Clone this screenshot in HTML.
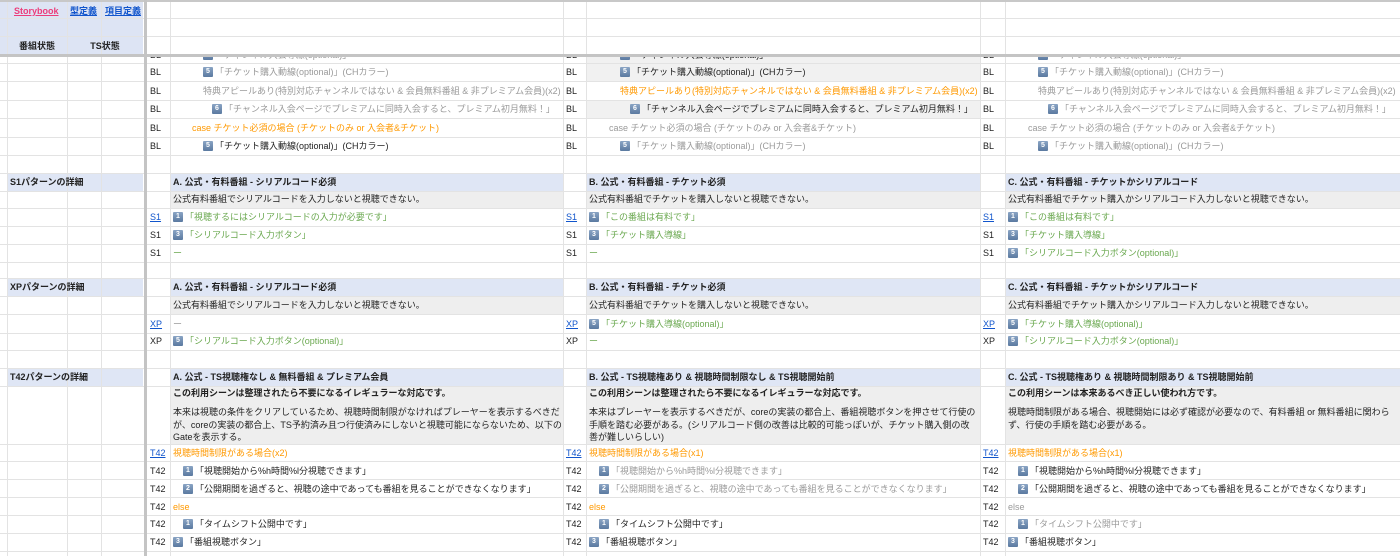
<!DOCTYPE html>
<html><head><meta charset="utf-8"><style>
*{margin:0;padding:0;box-sizing:border-box}
body{width:1400px;height:556px;overflow:hidden;background:#fff;font-family:"Liberation Sans","Noto Sans CJK JP",sans-serif;font-size:9px;color:#222;position:relative}
.a{position:absolute}
.hl{position:absolute;left:0;width:1400px;height:1px;background:#e3e3e3}
.vl{position:absolute;top:0;height:556px;width:1px;background:#e3e3e3}
.c{position:absolute;white-space:nowrap;line-height:18px;height:18px}
.g{color:#9a9a9a}.o{color:#f90}.gr{color:#6aa84f}.k{color:#222}
.lk{color:#1155cc;text-decoration:underline}
.b{display:inline-block;width:10px;height:10px;background:linear-gradient(#8aa4c4,#5b7aa0);color:#fff;font-size:7px;line-height:10px;text-align:center;border-radius:1px;margin-right:2px;vertical-align:middle;font-weight:bold;position:relative;top:-1px}
.hd{background:#dfe6f5;font-weight:bold;color:#222}
.ds{background:#eeeeee}
.bf{font-weight:bold}
.p{position:absolute;line-height:12.5px;white-space:nowrap}
</style></head><body>
<div class="a" style="left:0;top:0;width:143px;height:54px;background:#dde4f4"></div>
<div class="a" style="left:586px;top:56px;width:394px;height:25px;background:#f1f1f1"></div>
<div class="a" style="left:586px;top:100px;width:394px;height:18px;background:#f1f1f1"></div>
<div class="a hd" style="left:7px;top:173px;width:136px;height:18px"></div>
<div class="a hd" style="left:7px;top:278px;width:136px;height:18px"></div>
<div class="a hd" style="left:7px;top:368px;width:136px;height:18px"></div>
<div class="a hd" style="left:170px;top:173px;width:393px;height:18px"></div>
<div class="a hd" style="left:586px;top:173px;width:394px;height:18px"></div>
<div class="a hd" style="left:1005px;top:173px;width:395px;height:18px"></div>
<div class="a hd" style="left:170px;top:278px;width:393px;height:18px"></div>
<div class="a hd" style="left:586px;top:278px;width:394px;height:18px"></div>
<div class="a hd" style="left:1005px;top:278px;width:395px;height:18px"></div>
<div class="a hd" style="left:170px;top:368px;width:393px;height:18px"></div>
<div class="a hd" style="left:586px;top:368px;width:394px;height:18px"></div>
<div class="a hd" style="left:1005px;top:368px;width:395px;height:18px"></div>
<div class="a ds" style="left:170px;top:191px;width:393px;height:17px"></div>
<div class="a ds" style="left:586px;top:191px;width:394px;height:17px"></div>
<div class="a ds" style="left:1005px;top:191px;width:395px;height:17px"></div>
<div class="a ds" style="left:170px;top:296px;width:393px;height:18px"></div>
<div class="a ds" style="left:586px;top:296px;width:394px;height:18px"></div>
<div class="a ds" style="left:1005px;top:296px;width:395px;height:18px"></div>
<div class="a ds" style="left:170px;top:386px;width:393px;height:58px"></div>
<div class="a ds" style="left:586px;top:386px;width:394px;height:58px"></div>
<div class="a ds" style="left:1005px;top:386px;width:395px;height:58px"></div>
<div class="hl" style="top:18px"></div><div class="hl" style="top:36px"></div>
<div class="hl" style="top:63px"></div><div class="hl" style="top:81px"></div><div class="hl" style="top:100px"></div>
<div class="hl" style="top:118px"></div><div class="hl" style="top:137px"></div><div class="hl" style="top:155px"></div>
<div class="hl" style="top:173px"></div><div class="hl" style="top:191px"></div><div class="hl" style="top:208px"></div>
<div class="hl" style="top:226px"></div><div class="hl" style="top:244px"></div><div class="hl" style="top:262px"></div>
<div class="hl" style="top:278px"></div><div class="hl" style="top:296px"></div><div class="hl" style="top:314px"></div>
<div class="hl" style="top:333px"></div><div class="hl" style="top:350px"></div><div class="hl" style="top:368px"></div>
<div class="hl" style="top:386px"></div><div class="hl" style="top:444px"></div><div class="hl" style="top:461px"></div>
<div class="hl" style="top:479px"></div><div class="hl" style="top:497px"></div><div class="hl" style="top:515px"></div>
<div class="hl" style="top:533px"></div><div class="hl" style="top:551px"></div>
<div class="vl" style="left:7px"></div><div class="vl" style="left:67px"></div><div class="vl" style="left:101px"></div>
<div class="vl" style="left:170px"></div><div class="vl" style="left:563px"></div><div class="vl" style="left:586px"></div>
<div class="vl" style="left:980px"></div><div class="vl" style="left:1005px"></div>
<div class="a" style="left:0;top:0;width:1400px;height:2px;background:#c8c8c8"></div>
<div class="a" style="left:0;top:54px;width:1400px;height:3px;background:#c4c4c4"></div>
<div class="a" style="left:144px;top:0;width:3px;height:556px;background:#c4c4c4"></div>
<div class="c bf" style="left:14px;top:2px;color:#ec3d7a;text-decoration:underline">Storybook</div>
<div class="c bf lk" style="left:70px;top:2px">型定義</div>
<div class="c bf lk" style="left:105px;top:2px">項目定義</div>
<div class="c bf" style="left:7px;top:37px;width:60px;text-align:center">番組状態</div>
<div class="c bf" style="left:67px;top:37px;width:76px;text-align:center">TS状態</div>
<div class="c bf" style="left:10px;top:173px">S1パターンの詳細</div>
<div class="c bf" style="left:10px;top:278px">XPパターンの詳細</div>
<div class="c bf" style="left:10px;top:368px">T42パターンの詳細</div>

<div class="a" style="left:0;top:57px;width:1400px;height:6px;overflow:hidden">
<div class="c" style="left:150px;top:-11px">BL</div><div class="c g" style="left:203px;top:-11px"><span class="b">5</span>「チャンネル入会導線(optional)」</div>
<div class="c" style="left:566px;top:-11px">BL</div><div class="c k" style="left:620px;top:-11px"><span class="b">5</span>「チャンネル入会導線(optional)」</div>
<div class="c" style="left:983px;top:-11px">BL</div><div class="c g" style="left:1038px;top:-11px"><span class="b">5</span>「チャンネル入会導線(optional)」</div>
</div>

<div class="c" style="left:150px;top:63px">BL</div><div class="c g" style="left:203px;top:63px"><span class="b">5</span>「チケット購入動線(optional)」(CHカラー)</div>
<div class="c" style="left:566px;top:63px">BL</div><div class="c k" style="left:620px;top:63px"><span class="b">5</span>「チケット購入動線(optional)」(CHカラー)</div>
<div class="c" style="left:983px;top:63px">BL</div><div class="c g" style="left:1038px;top:63px"><span class="b">5</span>「チケット購入動線(optional)」(CHカラー)</div>

<div class="c" style="left:150px;top:82px">BL</div><div class="c g" style="left:203px;top:82px">特典アピールあり(特別対応チャンネルではない &amp; 会員無料番組 &amp; 非プレミアム会員)(x2)</div>
<div class="c" style="left:566px;top:82px">BL</div><div class="c o" style="left:620px;top:82px">特典アピールあり(特別対応チャンネルではない &amp; 会員無料番組 &amp; 非プレミアム会員)(x2)</div>
<div class="c" style="left:983px;top:82px">BL</div><div class="c g" style="left:1038px;top:82px">特典アピールあり(特別対応チャンネルではない &amp; 会員無料番組 &amp; 非プレミアム会員)(x2)</div>

<div class="c" style="left:150px;top:100px">BL</div><div class="c g" style="left:212px;top:100px"><span class="b">6</span>「チャンネル入会ページでプレミアムに同時入会すると、プレミアム初月無料！」</div>
<div class="c" style="left:566px;top:100px">BL</div><div class="c k" style="left:630px;top:100px"><span class="b">6</span>「チャンネル入会ページでプレミアムに同時入会すると、プレミアム初月無料！」</div>
<div class="c" style="left:983px;top:100px">BL</div><div class="c g" style="left:1048px;top:100px"><span class="b">6</span>「チャンネル入会ページでプレミアムに同時入会すると、プレミアム初月無料！」</div>

<div class="c" style="left:150px;top:119px">BL</div><div class="c o" style="left:192px;top:119px">case チケット必須の場合 (チケットのみ or 入会者&amp;チケット)</div>
<div class="c" style="left:566px;top:119px">BL</div><div class="c g" style="left:609px;top:119px">case チケット必須の場合 (チケットのみ or 入会者&amp;チケット)</div>
<div class="c" style="left:983px;top:119px">BL</div><div class="c g" style="left:1028px;top:119px">case チケット必須の場合 (チケットのみ or 入会者&amp;チケット)</div>

<div class="c" style="left:150px;top:137px">BL</div><div class="c k" style="left:203px;top:137px"><span class="b">5</span>「チケット購入動線(optional)」(CHカラー)</div>
<div class="c" style="left:566px;top:137px">BL</div><div class="c g" style="left:620px;top:137px"><span class="b">5</span>「チケット購入動線(optional)」(CHカラー)</div>
<div class="c" style="left:983px;top:137px">BL</div><div class="c g" style="left:1038px;top:137px"><span class="b">5</span>「チケット購入動線(optional)」(CHカラー)</div>

<div class="c bf" style="left:173px;top:173px">A. 公式・有料番組 - シリアルコード必須</div>
<div class="c bf" style="left:589px;top:173px">B. 公式・有料番組 - チケット必須</div>
<div class="c bf" style="left:1008px;top:173px">C. 公式・有料番組 - チケットかシリアルコード</div>
<div class="c" style="left:173px;top:190px">公式有料番組でシリアルコードを入力しないと視聴できない。</div>
<div class="c" style="left:589px;top:190px">公式有料番組でチケットを購入しないと視聴できない。</div>
<div class="c" style="left:1008px;top:190px">公式有料番組でチケット購入かシリアルコード入力しないと視聴できない。</div>

<div class="c lk" style="left:150px;top:208px">S1</div><div class="c gr" style="left:173px;top:208px"><span class="b">1</span>「視聴するにはシリアルコードの入力が必要です」</div>
<div class="c lk" style="left:566px;top:208px">S1</div><div class="c gr" style="left:589px;top:208px"><span class="b">1</span>「この番組は有料です」</div>
<div class="c lk" style="left:983px;top:208px">S1</div><div class="c gr" style="left:1008px;top:208px"><span class="b">1</span>「この番組は有料です」</div>
<div class="c" style="left:150px;top:226px">S1</div><div class="c gr" style="left:173px;top:226px"><span class="b">3</span>「シリアルコード入力ボタン」</div>
<div class="c" style="left:566px;top:226px">S1</div><div class="c gr" style="left:589px;top:226px"><span class="b">3</span>「チケット購入導線」</div>
<div class="c" style="left:983px;top:226px">S1</div><div class="c gr" style="left:1008px;top:226px"><span class="b">3</span>「チケット購入導線」</div>
<div class="c" style="left:150px;top:244px">S1</div><div class="c gr" style="left:173px;top:244px">ー</div>
<div class="c" style="left:566px;top:244px">S1</div><div class="c gr" style="left:589px;top:244px">ー</div>
<div class="c" style="left:983px;top:244px">S1</div><div class="c gr" style="left:1008px;top:244px"><span class="b">5</span>「シリアルコード入力ボタン(optional)」</div>

<div class="c bf" style="left:173px;top:278px">A. 公式・有料番組 - シリアルコード必須</div>
<div class="c bf" style="left:589px;top:278px">B. 公式・有料番組 - チケット必須</div>
<div class="c bf" style="left:1008px;top:278px">C. 公式・有料番組 - チケットかシリアルコード</div>
<div class="c" style="left:173px;top:296px">公式有料番組でシリアルコードを入力しないと視聴できない。</div>
<div class="c" style="left:589px;top:296px">公式有料番組でチケットを購入しないと視聴できない。</div>
<div class="c" style="left:1008px;top:296px">公式有料番組でチケット購入かシリアルコード入力しないと視聴できない。</div>
<div class="c lk" style="left:150px;top:315px">XP</div><div class="c g" style="left:173px;top:315px">ー</div>
<div class="c lk" style="left:566px;top:315px">XP</div><div class="c gr" style="left:589px;top:315px"><span class="b">5</span>「チケット購入導線(optional)」</div>
<div class="c lk" style="left:983px;top:315px">XP</div><div class="c gr" style="left:1008px;top:315px"><span class="b">5</span>「チケット購入導線(optional)」</div>
<div class="c" style="left:150px;top:332px">XP</div><div class="c gr" style="left:173px;top:332px"><span class="b">5</span>「シリアルコード入力ボタン(optional)」</div>
<div class="c" style="left:566px;top:332px">XP</div><div class="c gr" style="left:589px;top:332px">ー</div>
<div class="c" style="left:983px;top:332px">XP</div><div class="c gr" style="left:1008px;top:332px"><span class="b">5</span>「シリアルコード入力ボタン(optional)」</div>

<div class="c bf" style="left:173px;top:368px">A. 公式 - TS視聴権なし &amp; 無料番組 &amp; プレミアム会員</div>
<div class="c bf" style="left:589px;top:368px">B. 公式 - TS視聴権あり &amp; 視聴時間制限なし &amp; TS視聴開始前</div>
<div class="c bf" style="left:1008px;top:368px">C. 公式 - TS視聴権あり &amp; 視聴時間制限あり &amp; TS視聴開始前</div>
<div class="c bf" style="left:173px;top:384px">この利用シーンは整理されたら不要になるイレギュラーな対応です。</div>
<div class="c bf" style="left:589px;top:384px">この利用シーンは整理されたら不要になるイレギュラーな対応です。</div>
<div class="c bf" style="left:1008px;top:384px">この利用シーンは本来あるべき正しい使われ方です。</div>
<div class="p" style="left:173px;top:406px">本来は視聴の条件をクリアしているため、視聴時間制限がなければプレーヤーを表示するべきだ<br>が、coreの実装の都合上、TS予約済み且つ行使済みにしないと視聴可能にならないため、以下の<br>Gateを表示する。</div>
<div class="p" style="left:589px;top:406px">本来はプレーヤーを表示するべきだが、coreの実装の都合上、番組視聴ボタンを押させて行使の<br>手順を踏む必要がある。(シリアルコード側の改善は比較的可能っぽいが、チケット購入側の改<br>善が難しいらしい)</div>
<div class="p" style="left:1008px;top:406px">視聴時間制限がある場合、視聴開始には必ず確認が必要なので、有料番組 or 無料番組に関わら<br>ず、行使の手順を踏む必要がある。</div>

<div class="c lk" style="left:150px;top:444px">T42</div><div class="c o" style="left:173px;top:444px">視聴時間制限がある場合(x2)</div>
<div class="c lk" style="left:566px;top:444px">T42</div><div class="c o" style="left:589px;top:444px">視聴時間制限がある場合(x1)</div>
<div class="c lk" style="left:983px;top:444px">T42</div><div class="c o" style="left:1008px;top:444px">視聴時間制限がある場合(x1)</div>

<div class="c" style="left:150px;top:462px">T42</div><div class="c k" style="left:183px;top:462px"><span class="b">1</span>「視聴開始から%h時間%l分視聴できます」</div>
<div class="c" style="left:566px;top:462px">T42</div><div class="c g" style="left:599px;top:462px"><span class="b">1</span>「視聴開始から%h時間%l分視聴できます」</div>
<div class="c" style="left:983px;top:462px">T42</div><div class="c k" style="left:1018px;top:462px"><span class="b">1</span>「視聴開始から%h時間%l分視聴できます」</div>

<div class="c" style="left:150px;top:480px">T42</div><div class="c k" style="left:183px;top:480px"><span class="b">2</span>「公開期間を過ぎると、視聴の途中であっても番組を見ることができなくなります」</div>
<div class="c" style="left:566px;top:480px">T42</div><div class="c g" style="left:599px;top:480px"><span class="b">2</span>「公開期間を過ぎると、視聴の途中であっても番組を見ることができなくなります」</div>
<div class="c" style="left:983px;top:480px">T42</div><div class="c k" style="left:1018px;top:480px"><span class="b">2</span>「公開期間を過ぎると、視聴の途中であっても番組を見ることができなくなります」</div>

<div class="c" style="left:150px;top:498px">T42</div><div class="c o" style="left:173px;top:498px">else</div>
<div class="c" style="left:566px;top:498px">T42</div><div class="c o" style="left:589px;top:498px">else</div>
<div class="c" style="left:983px;top:498px">T42</div><div class="c g" style="left:1008px;top:498px">else</div>

<div class="c" style="left:150px;top:515px">T42</div><div class="c k" style="left:183px;top:515px"><span class="b">1</span>「タイムシフト公開中です」</div>
<div class="c" style="left:566px;top:515px">T42</div><div class="c k" style="left:599px;top:515px"><span class="b">1</span>「タイムシフト公開中です」</div>
<div class="c" style="left:983px;top:515px">T42</div><div class="c g" style="left:1018px;top:515px"><span class="b">1</span>「タイムシフト公開中です」</div>

<div class="c" style="left:150px;top:533px">T42</div><div class="c k" style="left:173px;top:533px"><span class="b">3</span>「番組視聴ボタン」</div>
<div class="c" style="left:566px;top:533px">T42</div><div class="c k" style="left:589px;top:533px"><span class="b">3</span>「番組視聴ボタン」</div>
<div class="c" style="left:983px;top:533px">T42</div><div class="c k" style="left:1008px;top:533px"><span class="b">3</span>「番組視聴ボタン」</div>
</body></html>
